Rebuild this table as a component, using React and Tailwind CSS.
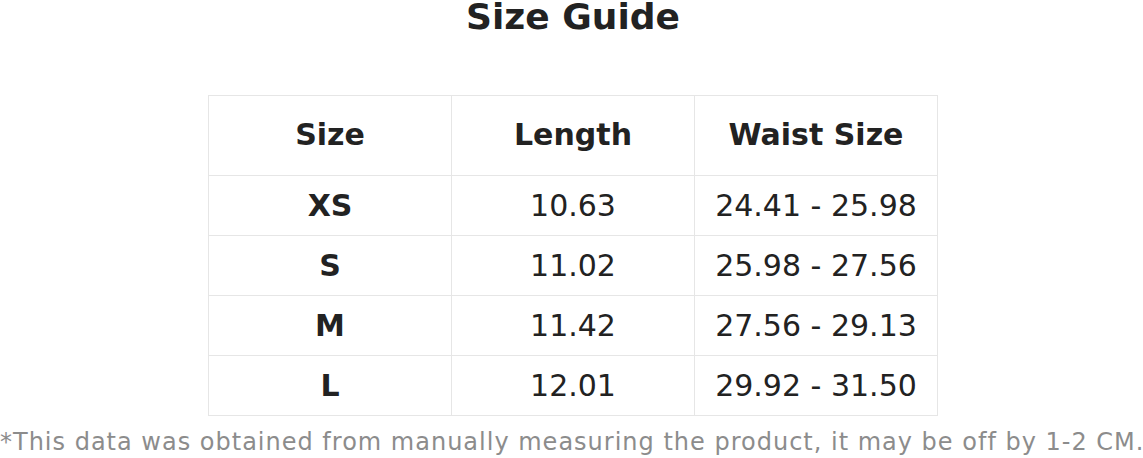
import React from 'react';

const rows = [
  { size: 'XS', length: '10.63', waist: '24.41 - 25.98' },
  { size: 'S', length: '11.02', waist: '25.98 - 27.56' },
  { size: 'M', length: '11.42', waist: '27.56 - 29.13' },
  { size: 'L', length: '12.01', waist: '29.92 - 31.50' },
];

const App = () => {
  return (
    <div className="w-full bg-white font-['DejaVu_Sans',sans-serif] text-[#222]">
      <div className="pl-[3px]">
        <h2 className="pt-[1px] text-center text-[36px] leading-[32px] font-bold">Size Guide</h2>

        <table className="mx-auto mt-[62px] w-[730px] table-fixed border-collapse text-center text-[30px]">
          <thead>
            <tr>
              <th className="h-[80px] w-[243px] border border-[#e6e6e6] pb-[2px] font-bold">Size</th>
              <th className="h-[80px] w-[243px] border border-[#e6e6e6] pb-[2px] font-bold">Length</th>
              <th className="h-[80px] w-[243px] border border-[#e6e6e6] pb-[2px] font-bold">Waist Size</th>
            </tr>
          </thead>
          <tbody>
            {rows.map((r) => (
              <tr key={r.size}>
                <td className="h-[60px] border border-[#e6e6e6] font-bold">{r.size}</td>
                <td className="h-[60px] border border-[#e6e6e6]">{r.length}</td>
                <td className="h-[60px] border border-[#e6e6e6]">{r.waist}</td>
              </tr>
            ))}
          </tbody>
        </table>
      </div>

      {/* footnote */}
      <p className="mt-[10px] whitespace-nowrap text-center text-[24px] leading-[32px] tracking-[1px] text-[#8c8c8c]">
        *This data was obtained from manually measuring the product, it may be off by 1-2 CM.
      </p>
    </div>
  );
};

export default App;
